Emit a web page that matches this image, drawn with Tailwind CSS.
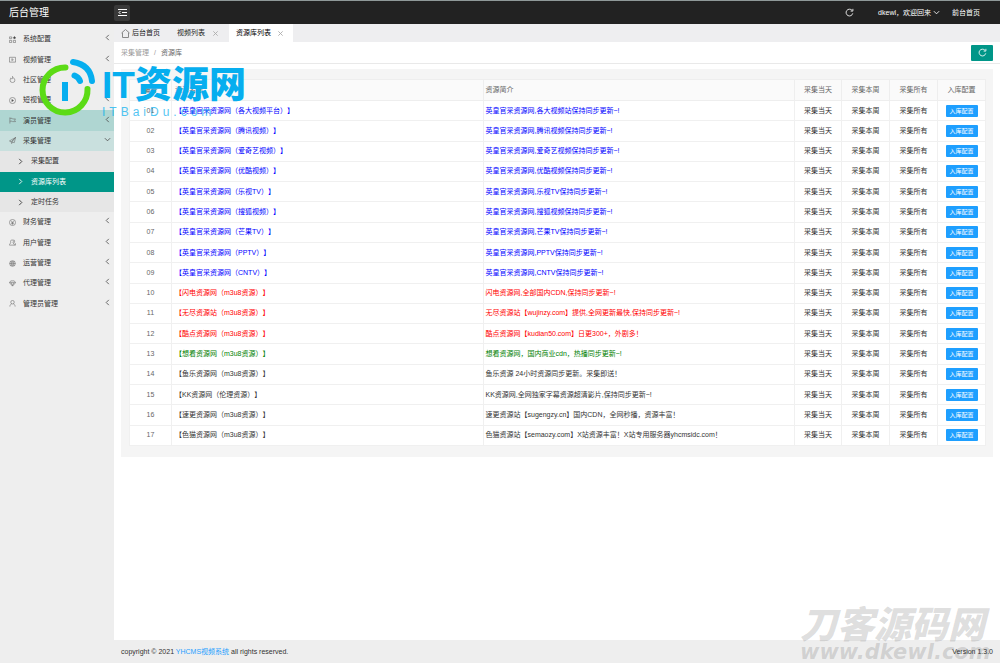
<!DOCTYPE html>
<html lang="zh-CN">
<head>
<meta charset="utf-8">
<title>后台管理</title>
<script src="https://cdn.jsdelivr.net/npm/@tailwindcss/browser@4"></script>
</head>
<body class="relative flex min-h-screen flex-col overflow-x-hidden bg-white font-['Liberation_Sans','Noto_Sans_CJK_SC',sans-serif] text-[7px] leading-[10px] text-[#333] [text-spacing-trim:space-all]">

<svg class="hidden">
  <defs>
    <symbol id="left" viewBox="0 0 8 8"><path d="M5.5 1 2.5 4l3 3"/></symbol>
    <symbol id="right" viewBox="0 0 8 8"><path d="M2.5 1l3 3-3 3"/></symbol>
    <symbol id="down" viewBox="0 0 8 8"><path d="M1 2.5l3 3 3-3"/></symbol>
    <symbol id="close" viewBox="0 0 8 8"><path d="M1.5 1.5l5 5M6.500 1.500l-5 5"/></symbol>
    <symbol id="refresh" viewBox="0 0 16 16"><path d="M13.800 9.500A6 6 0 1 1 12.500 4.200M14 1.500v4h-4"/></symbol>
    <symbol id="apps" viewBox="0 0 16 16"><path d="M1 2h5v4H1zM1 10h5v5H1zM10 10h5v5h-5z"/><path d="M12.500 1 15.500 4l-3 3-3-3z" fill="currentColor"/></symbol>
    <symbol id="video" viewBox="0 0 16 16"><path d="M1 3h14v11H1zM6.500 6v4.500l3.500-2z"/></symbol>
    <symbol id="fire" viewBox="0 0 16 16"><path d="M8 1c0 3 5.500 4 5.500 8.500a5.500 5.500 0 0 1-11 0C2.500 7 4 6 4 4.500 6 5.500 6 7 7 7c1.500-1 1-4 1-6z"/></symbol>
    <symbol id="play" viewBox="0 0 16 16"><circle cx="8" cy="8" r="7"/><path d="M6.500 5.500v5l4-2.500z" fill="currentColor"/></symbol>
    <symbol id="flag" viewBox="0 0 16 16"><path d="M2 1v14M2 3h5l1 1.500h7L12.500 7l2.500 3.500H8L7 9.500H2"/></symbol>
    <symbol id="plane" viewBox="0 0 16 16"><path d="M15 1 1 9l4 2zM15 1l-3 12-5-2zM5 11l1 4 2-3.500"/></symbol>
    <symbol id="money" viewBox="0 0 16 16"><circle cx="8" cy="8" r="7"/><path d="M5 4l3 4 3-4M8 8v5M5 8.500h6M5 10.500h6"/></symbol>
    <symbol id="users" viewBox="0 0 16 16"><path d="M1 14v-2l3-3C3 5 4 2 7 2s4 3 2 7l3 3v2zM10 2c4 0 3 5 2 6l3 3v3h-3"/></symbol>
    <symbol id="globe" viewBox="0 0 16 16"><circle cx="8" cy="8" r="6.500"/><circle cx="8" cy="8" r="3"/><path d="M1.500 8h13M3 4h10M3 12h10"/></symbol>
    <symbol id="diamond" viewBox="0 0 16 16"><path d="M4 2h8l3 4-7 8-7-8zM1 6h14M5 6l3 7 3-7"/></symbol>
    <symbol id="user" viewBox="0 0 16 16"><circle cx="8" cy="5" r="4"/><path d="M2 15c0-3 1.500-5 4-6.500M14 15c0-3-1.500-5-4-6.500"/></symbol>
  </defs>
</svg>

<header class="flex h-6 items-center border-t border-[#8f9999] bg-[#222] text-white">
  <div class="w-[114px] pl-[9px] text-[10px]">后台管理</div>
  <button aria-label="收起菜单" class="flex size-4 items-center justify-center rounded-xs bg-[#393939]">
    <svg class="size-[9px]" viewBox="0 0 9 9" fill="none" stroke="currentColor"><path d="M0 1.500h9M4 4.500h5M0 7.500h9M2.500 3 1 4.500 2.500 6"/></svg>
  </button>
  <nav class="ml-auto flex items-center pr-5">
    <button aria-label="刷新" class="mr-6"><svg class="size-[9px] fill-none stroke-current stroke-[1.5]"><use href="#refresh"/></svg></button>
    <a href="#" class="mr-3 flex items-center gap-0.5">dkewl，欢迎回来<svg class="size-[7px] fill-none stroke-current"><use href="#down"/></svg></a>
    <a href="#">前台首页</a>
  </nav>
</header>

<div class="flex grow">
  <aside class="w-[114px] shrink-0 bg-[#eee] pt-[5px]">
    <ul id="menu" class="flex h-[285px] flex-col"></ul>
  </aside>

  <div class="flex min-w-0 grow flex-col">
    <nav class="flex h-[18px] items-stretch bg-[#eeeef0] text-[#222]">
      <a href="#" class="flex w-[55px] items-center gap-0.5 pl-[7px]">
        <svg class="size-[9px] fill-none stroke-[#888]" viewBox="0 0 9 9"><path d="M.5 4 4.500.5l4 3.500M1.500 3.500v5h6v-5"/></svg>后台首页</a>
      <div class="flex w-[60px] items-center justify-between pr-[10px] pl-2"><a href="#">视频列表</a><button aria-label="关闭视频列表"><svg class="size-[7px] fill-none stroke-[#aaa]"><use href="#close"/></svg></button></div>
      <div class="flex w-16 items-center justify-between bg-white pr-[9px] pl-[7px] text-black"><a href="#">资源库列表</a><button aria-label="关闭资源库列表"><svg class="size-[7px] fill-none stroke-[#aaa]"><use href="#close"/></svg></button></div>
    </nav>
    <div class="flex h-[22px] items-center gap-[5px] border-b border-[#e9e9e9] pr-[7px] pl-[7px]">
      <a href="#" class="text-[#999]">采集管理</a><span class="text-[#999]">/</span><span class="text-[#666]">资源库</span>
      <button aria-label="刷新" class="ml-auto flex h-4 w-[22px] items-center justify-center rounded-[1px] bg-[#009688] text-white"><svg class="size-[9px] fill-none stroke-current stroke-[1.5]"><use href="#refresh"/></svg></button>
    </div>
    <main class="mt-[5px] mr-[7px] mb-4 ml-[7px] bg-[#f5f5f5] pt-[10px] pr-[7px] pb-[11px] pl-2">
      <table class="h-[367px] w-full table-fixed border-collapse bg-white [&_td]:border [&_td]:border-[#f0f0f0] [&_td]:p-0 [&_th]:border [&_th]:border-[#eee] [&_th]:p-0 [&_th]:font-normal">
        <colgroup><col class="w-[42px]"><col><col><col class="w-[47px]"><col class="w-[48px]"><col class="w-[48px]"><col class="w-[48px]"></colgroup>
        <thead class="bg-[#fafafa] text-[#666]">
          <tr class="h-[21px]"><th>编号</th><th><div class="px-[3px] text-left">资源名称</div></th><th><div class="px-[2px] text-left">资源简介</div></th><th>采集当天</th><th>采集本周</th><th>采集所有</th><th>入库配置</th></tr>
        </thead>
        <tbody id="rows"></tbody>
      </table>
    </main>
    <footer class="mt-auto flex h-[23px] items-center justify-between bg-[#eee] pr-[7px] pl-[7px]">
      <p>copyright © 2021 <a href="#" class="text-[#1e9fff]">YHCMS视频系统</a> all rights reserved.</p>
      <p class="relative z-10">Version 1.3.0</p>
    </footer>
  </div>
</div>

<div class="pointer-events-none absolute top-[58px] left-[39px]">
  <svg class="h-[58px] w-[58px]" viewBox="0 0 58 58" fill="none" stroke-linecap="round">
    <path d="M26.500 9.500A22.500 22.500 0 1 0 48.500 31" stroke="#5cdb16" stroke-width="6"/>
    <path d="M34 4C46 6 52 13 53 23" stroke="#06aeef" stroke-width="6"/>
    <path d="M35.500 17.500Q39.500 19 41 23" stroke="#06aeef" stroke-width="6"/>
    <path d="M26 24v19" stroke="#06aeef" stroke-width="6" stroke-linecap="butt"/>
  </svg>
</div>
<div class="pointer-events-none absolute top-[66px] left-[102px] text-[#06aeef]">
  <div class="text-[37px] leading-10 font-black">IT资源网</div>
  <div class="text-[12px] leading-3 tracking-[4px] opacity-70">ITBaiDu.com</div>
</div>
<div class="pointer-events-none absolute right-[10px] bottom-[3px] w-[190px] text-[#555]/20 italic">
  <div class="text-[37px] leading-[36px] font-black">刀客源码网</div>
  <div class="font-['DejaVu_Sans'] text-[21px] leading-4 font-bold">www.dkewl.com</div>
</div>

<script>
const items = [
  ['apps', '系统配置'], ['video', '视频管理'], ['fire', '社区管理'], ['play', '短视管理'],
  ['flag', '演员管理', 'bg-[#afd6d2]'], ['plane', '采集管理', 'bg-[#c9e0de]', ['采集配置', '资源库列表', '定时任务']],
  ['money', '财务管理'], ['users', '用户管理'], ['globe', '运营管理'], ['diamond', '代理管理'], ['user', '管理员管理']
];
document.getElementById('menu').innerHTML = items.map(([icon, name, tint = '', sub]) => {
  const link = `<a href="#" class="flex flex-1 items-center pr-[3px] pl-[9px] ${tint}">
    <svg class="mr-[7px] size-[7px] fill-none stroke-[#666] stroke-[1.3] text-[#444]"><use href="#${icon}"/></svg>${name}
    <svg class="mb-[3px] ml-auto size-[7px] fill-none stroke-[#555]"><use href="#${sub ? 'down' : 'left'}"/></svg></a>`;
  if (!sub) return `<li class="flex flex-1">${link}</li>`;
  return `<li class="flex flex-4 flex-col">${link}<ul class="flex flex-3 flex-col bg-[#e6e6e6]">${sub.map((s, i) =>
    `<li class="flex flex-1"><a href="#" class="flex flex-1 items-center pl-[17px] ${i === 1 ? 'bg-[#009688] text-white' : ''}"><svg class="mr-[7px] size-[7px] fill-none stroke-current"><use href="#right"/></svg>${s}</a></li>`).join('')}</ul></li>`;
}).join('');

const B = 'text-[#00f]', R = 'text-[#f00]', G = 'text-[#008000]', K = '';
const rows = [
  [B, '英皇官采资源网（各大视频平台）', '英皇官采资源网,各大视频站保持同步更新~!'],
  [B, '英皇官采资源网（腾讯视频）', '英皇官采资源网,腾讯视频保持同步更新~!'],
  [B, '英皇官采资源网（爱奇艺视频）', '英皇官采资源网,爱奇艺视频保持同步更新~!'],
  [B, '英皇官采资源网（优酷视频）', '英皇官采资源网,优酷视频保持同步更新~!'],
  [B, '英皇官采资源网（乐视TV）', '英皇官采资源网,乐视TV保持同步更新~!'],
  [B, '英皇官采资源网（搜狐视频）', '英皇官采资源网,搜狐视频保持同步更新~!'],
  [B, '英皇官采资源网（芒果TV）', '英皇官采资源网,芒果TV保持同步更新~!'],
  [B, '英皇官采资源网（PPTV）', '英皇官采资源网,PPTV保持同步更新~!'],
  [B, '英皇官采资源网（CNTV）', '英皇官采资源网,CNTV保持同步更新~!'],
  [R, '闪电资源网（m3u8资源）', '闪电资源网,全部国内CDN,保持同步更新~!'],
  [R, '无尽资源站（m3u8资源）', '无尽资源站【wujinzy.com】提供,全网更新最快,保持同步更新~!'],
  [R, '酷点资源网（m3u8资源）', '酷点资源网【kudian50.com】日更300+，外剧多！'],
  [G, '想看资源网（m3u8资源）', '想看资源网，国内商业cdn，热播同步更新~!'],
  [K, '鱼乐资源网（m3u8资源）', '鱼乐资源 24小时资源同步更新。采集即送！'],
  [K, 'KK资源网（伦理资源）', 'KK资源网,全网独家字幕资源超清影片,保持同步更新~!'],
  [K, '速更资源网（m3u8资源）', '速更资源站【sugengzy.cn】国内CDN，全网秒播，资源丰富！'],
  [K, '色猫资源网（m3u8资源）', '色猫资源站【semaozy.com】X站资源丰富！X站专用服务器yhcmsidc.com！']
];
document.getElementById('rows').innerHTML = rows.map(([c, name, desc], i) => `<tr class="text-center">
  <td class="text-[#666]">${String(i + 1).padStart(2, '0')}</td>
  <td><div class="px-[3px] text-left ${c}">【${name}】</div></td>
  <td><div class="px-[2px] text-left ${c}">${desc}</div></td>
  <td><a href="#">采集当天</a></td><td><a href="#">采集本周</a></td><td><a href="#">采集所有</a></td>
  <td><button class="mx-auto block h-3 w-8 rounded-[1px] bg-[#1e9fff] text-[6px] leading-3 text-white">入库配置</button></td></tr>`).join('');
</script>
</body>
</html>
